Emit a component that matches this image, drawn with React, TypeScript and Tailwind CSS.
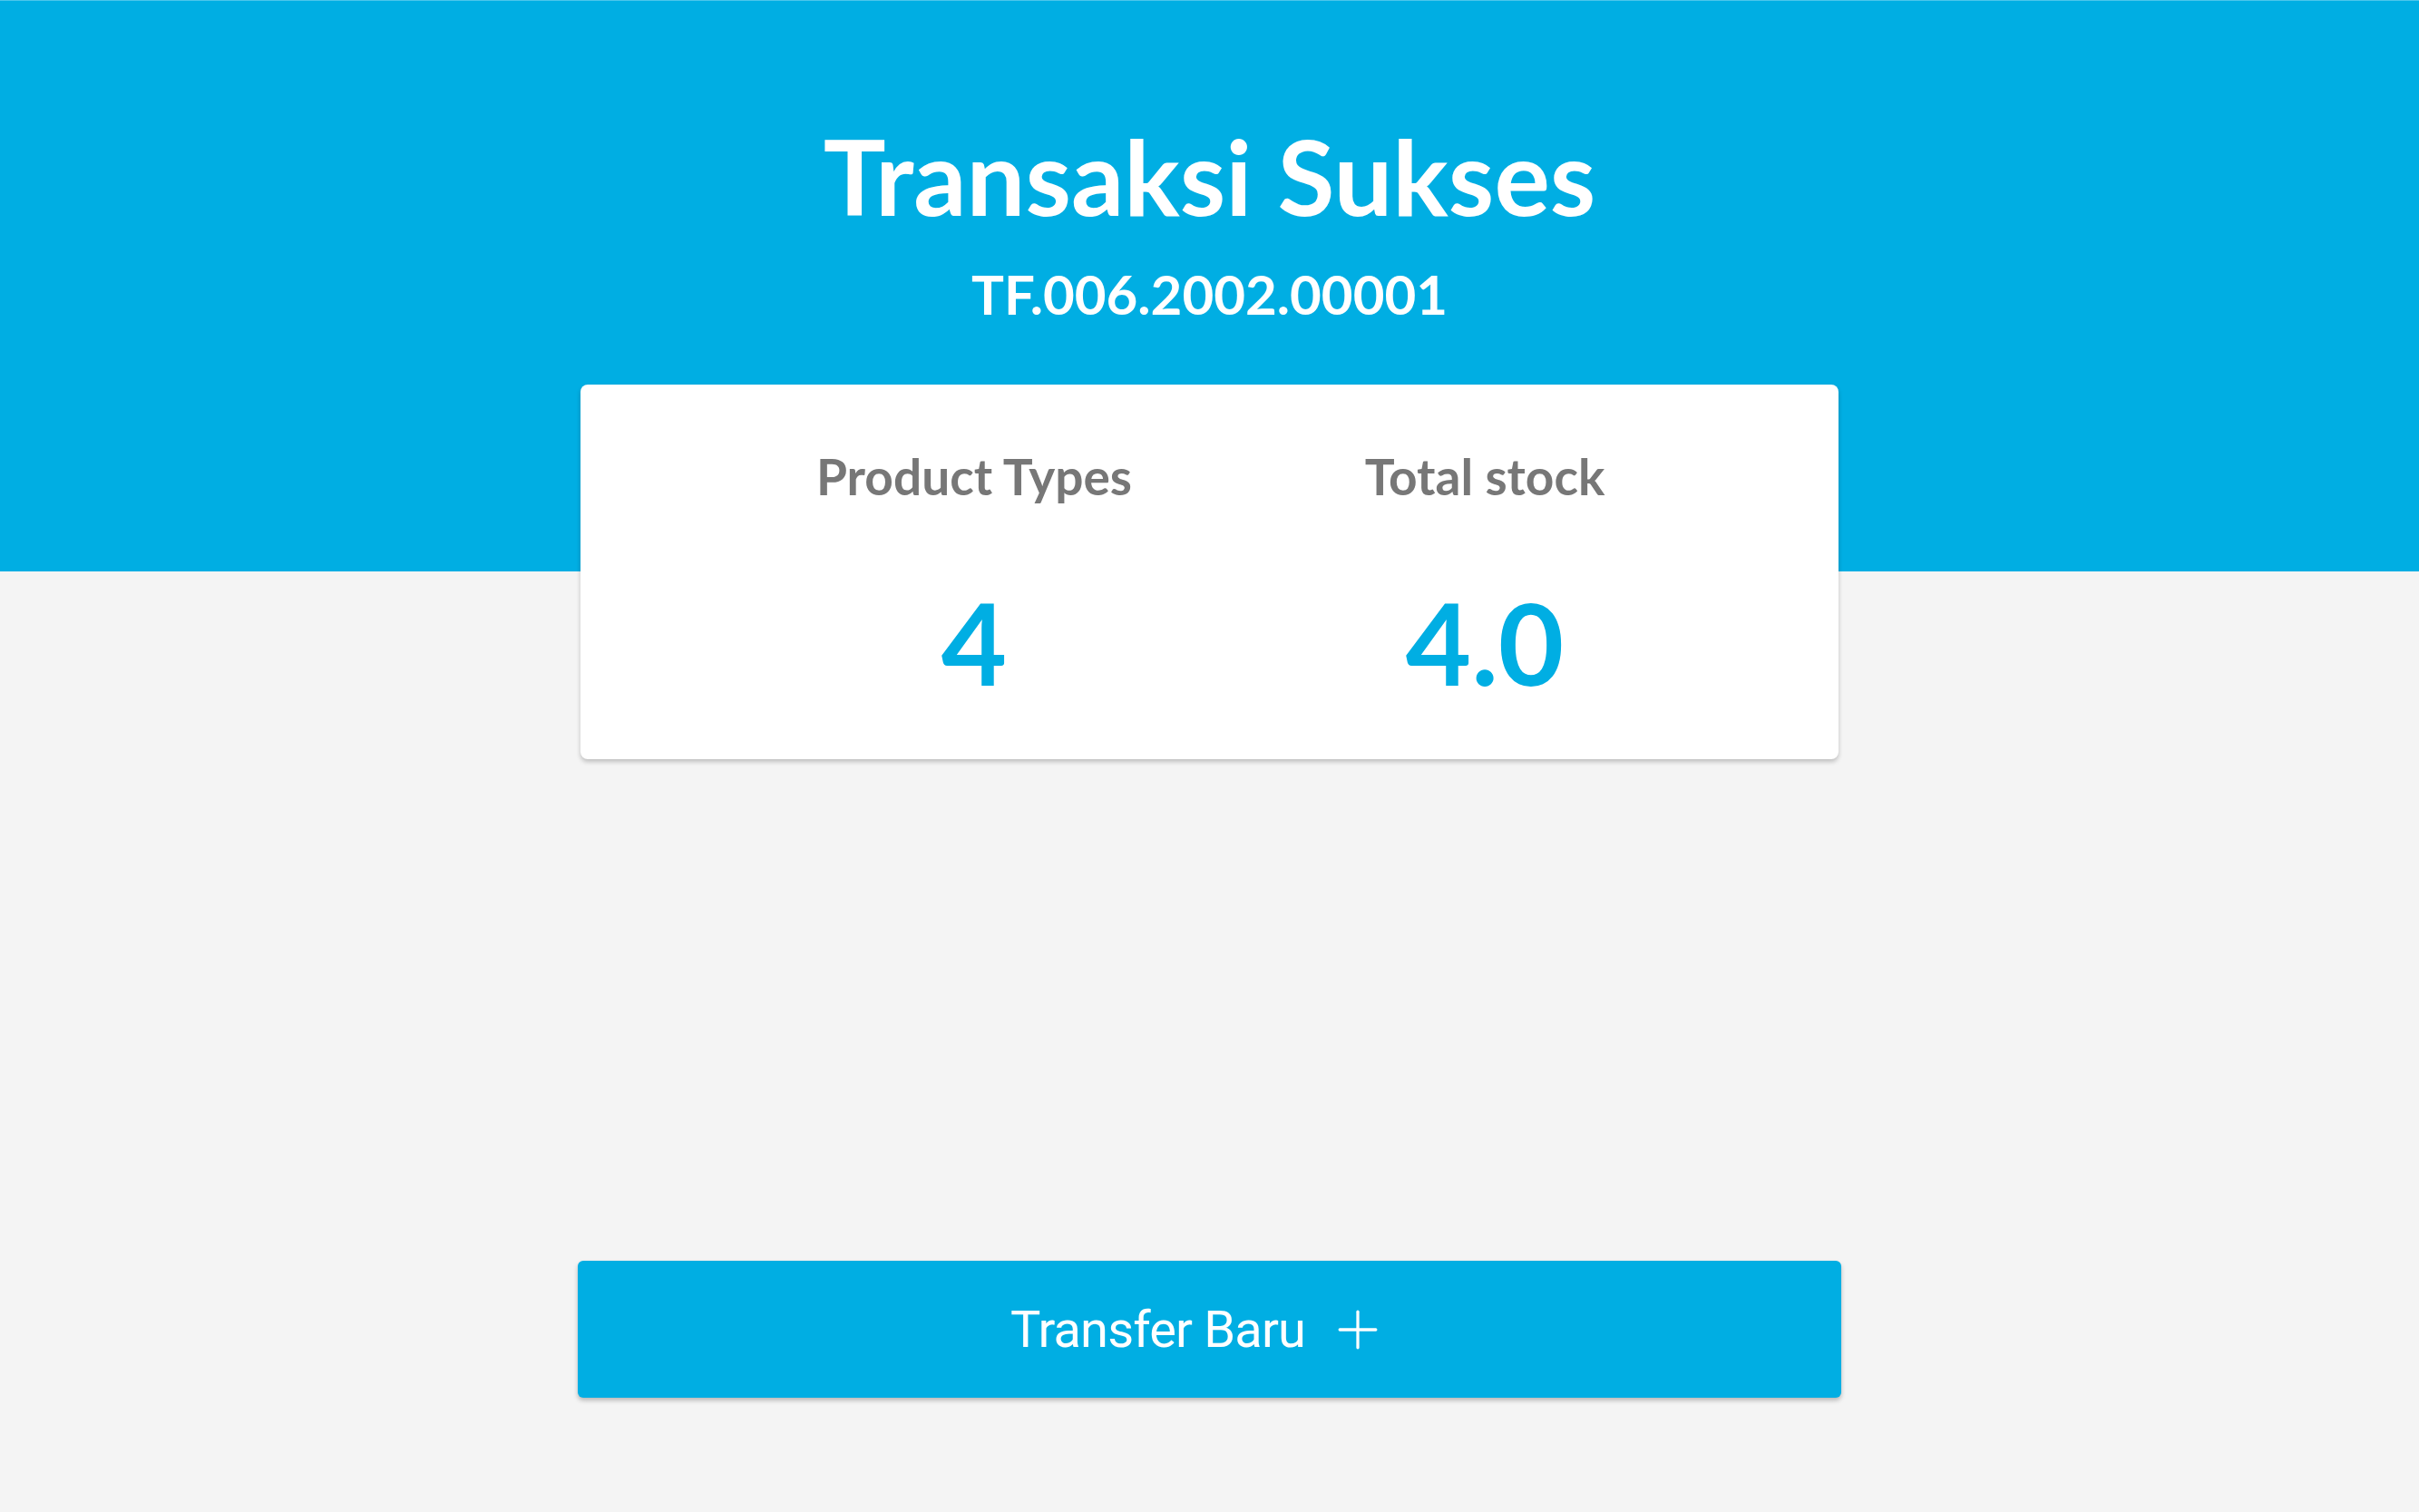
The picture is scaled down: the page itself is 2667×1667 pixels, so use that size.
import { Plus } from "lucide-react";

const stats = [
  { label: "Product Types", value: "4" },
  { label: "Total stock", value: "4.0" },
];

export default function App() {
  return (
    <div className="min-h-screen w-full bg-[linear-gradient(to_bottom,#00aee3_630px,#f4f4f4_630px)] font-['Lato',sans-serif]">
      <div className="h-px w-full bg-[#4cc6ec]" />
      <div className="flex flex-col items-center">
        <h1 className="mt-[135px] text-[115px] font-bold leading-none text-white">Transaksi Sukses</h1>
        <p className="mt-[43px] text-[60px] font-bold leading-none text-white">TF.006.2002.00001</p>

        {/* ringkasan */}
        <div className="mt-[70px] w-[1387px] rounded-[8px] bg-white pt-[74px] pb-[66px] pl-[44px] shadow-[0_3px_5px_rgba(0,0,0,0.22)]">
          <div className="flex justify-center">
            {stats.map((s) => (
              <div key={s.label} className="flex w-[563px] flex-col items-center">
                <span className="text-[55px] font-bold leading-none text-[#777777]">{s.label}</span>
                <span className="mt-[93px] text-[125px] font-bold leading-none text-[#00aee3]">{s.value}</span>
              </div>
            ))}
          </div>
        </div>

        <button className="mt-[553px] flex h-[151px] w-[1393px] items-center justify-center gap-[24px] rounded-[6px] bg-[#00aee3] pr-[22px] text-white shadow-[0_3px_5px_rgba(0,0,0,0.25)]">
          <span className="font-['Roboto',sans-serif] text-[56px] font-normal leading-none tracking-[-0.015em]">Transfer Baru</span>
          <Plus className="h-[68px] w-[68px]" strokeWidth={1.15} />
        </button>
      </div>
    </div>
  );
}
